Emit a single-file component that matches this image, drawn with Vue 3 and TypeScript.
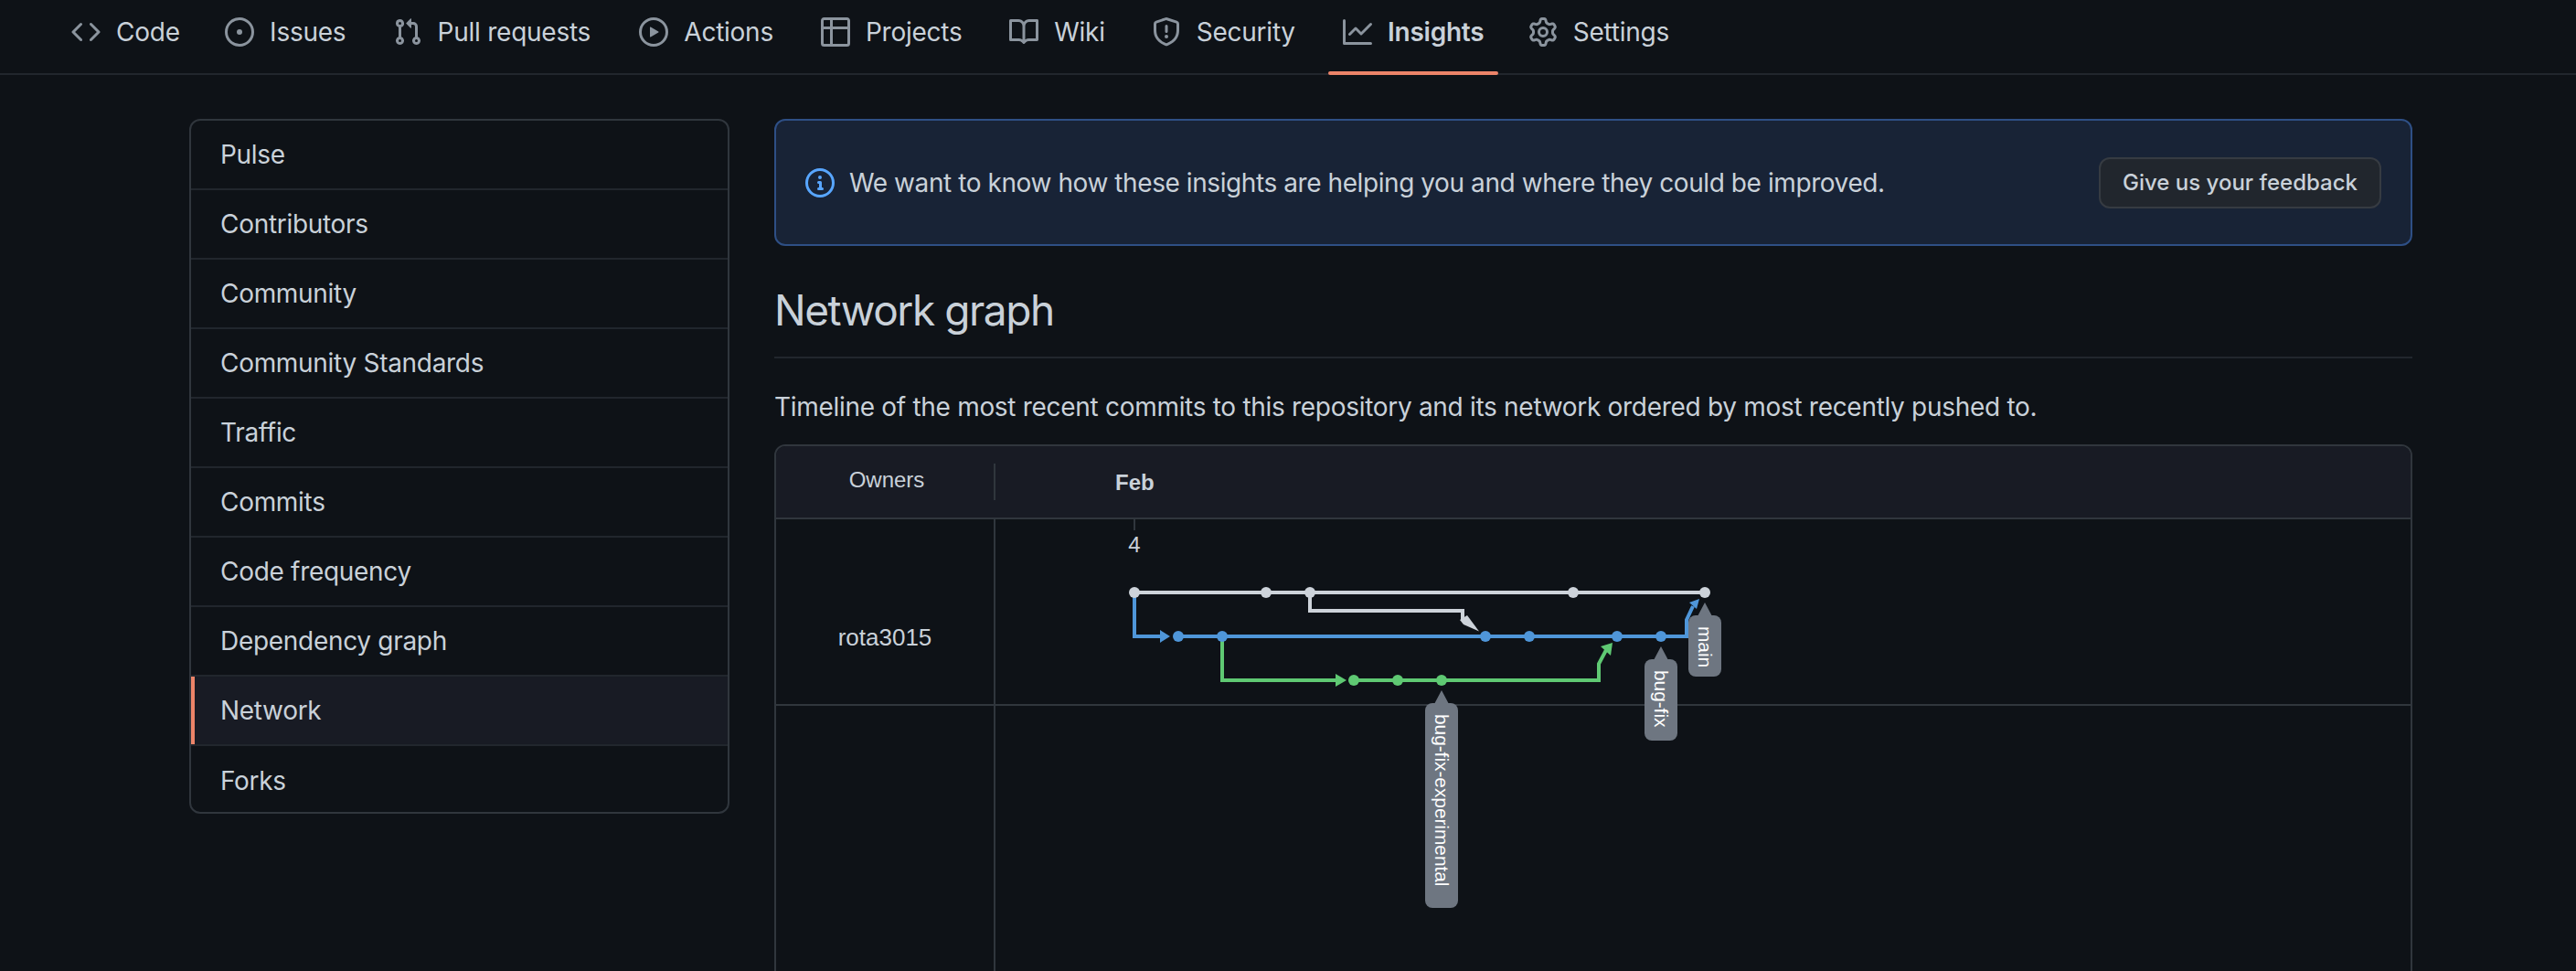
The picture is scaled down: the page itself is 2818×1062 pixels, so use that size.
<template>
  <div class="page">
    <!-- 顶部标签栏 -->
    <nav class="tabs">
      <a v-for="tab in tabs" :key="tab.name" class="tab" :class="{ active: tab.name === 'Insights' }">
        <svg class="tab-icon" width="32" height="32" viewBox="0 0 16 16" fill="currentColor">
          <path v-for="d in tab.paths" :key="d" :d="d" />
        </svg>
        <span class="tab-text" :data-content="tab.name">{{ tab.name }}</span>
      </a>
    </nav>

    <div class="layout">
      <!-- 侧边菜单 -->
      <aside class="menu">
        <a v-for="item in menuItems" :key="item" class="menu-item" :class="{ selected: item === 'Network' }">{{ item }}</a>
      </aside>

      <main class="content">
        <div class="banner">
          <svg class="banner-icon" width="32" height="32" viewBox="0 0 16 16" fill="currentColor">
            <path d="M0 8a8 8 0 1 1 16 0A8 8 0 0 1 0 8Zm8-6.5a6.5 6.5 0 1 0 0 13 6.5 6.5 0 0 0 0-13ZM6.5 7.75A.75.75 0 0 1 7.25 7h1a.75.75 0 0 1 .75.75v2.75h.25a.75.75 0 0 1 0 1.5h-2a.75.75 0 0 1 0-1.5h.25v-2h-.25a.75.75 0 0 1-.75-.75ZM8 6a1 1 0 1 1 0-2 1 1 0 0 1 0 2Z" />
          </svg>
          <span class="banner-text">We want to know how these insights are helping you and where they could be improved.</span>
          <button class="feedback-btn">Give us your feedback</button>
        </div>

        <h2 class="title">Network graph</h2>
        <p class="desc">Timeline of the most recent commits to this repository and its network ordered by most recently pushed to.</p>

        <div class="graph">
          <div class="graph-head">
            <div class="owners-head"><span>Owners</span></div>
            <div class="month">Feb</div>
          </div>
          <div class="graph-row">
            <div class="owner-cell">rota3015</div>
            <div class="canvas-cell"></div>
          </div>
          <div class="graph-row empty">
            <div class="owner-cell"></div>
            <div class="canvas-cell"></div>
          </div>

          <svg class="network" width="1792" height="576" viewBox="847 486 1792 576">
            <line x1="1241" y1="568" x2="1241" y2="580" stroke="#30363d" stroke-width="2" />
            <text x="1241" y="604" class="day" text-anchor="middle">4</text>

            <g fill="none" stroke-width="4">
              <path :d="whitePath" stroke="#cdd3da" />
              <path :d="bluePath" stroke="#4f96d9" />
              <path :d="greenPath" stroke="#5fc973" />
            </g>
            <polygon points="1280,696 1269,689 1269,703" fill="#4f96d9" />
            <polygon points="1473,744 1461,737 1461,751" fill="#5fc973" />
            <polygon points="1618,690.5 1605,673 1597,678 1601,683" fill="#cdd3da" />
            <polygon points="1859,655 1848,659 1856,666" fill="#4f96d9" />
            <polygon points="1764,703 1751,707 1762,717" fill="#5fc973" />

            <circle v-for="x in whiteNodes" :key="'w' + x" :cx="x" cy="648" r="6" fill="#cdd3da" />
            <circle v-for="x in blueNodes" :key="'b' + x" :cx="x" cy="696" r="6" fill="#4f96d9" />
            <circle v-for="x in greenNodes" :key="'g' + x" :cx="x" cy="744" r="6" fill="#5fc973" />

            <g v-for="label in labels" :key="label.text">
              <polygon :points="`${label.x},${label.tip} ${label.x - 8},${label.top + 1} ${label.x + 8},${label.top + 1}`" fill="#6e7681" />
              <rect :x="label.x - 18" :y="label.top" width="36" :height="label.height" rx="8" fill="#6e7681" />
              <text class="ref" :transform="`translate(${label.x - 7} ${label.top + 12}) rotate(90)`">{{ label.text }}</text>
            </g>
          </svg>
        </div>
      </main>
    </div>
  </div>
</template>

<script setup lang="ts">
interface Tab {
  name: string
  paths: string[]
}

const tabs: Tab[] = [
  { name: 'Code', paths: ['m11.28 3.22 4.25 4.25a.75.75 0 0 1 0 1.06l-4.25 4.25a.749.749 0 0 1-1.275-.326.749.749 0 0 1 .215-.734L13.94 8l-3.72-3.72a.749.749 0 0 1 .326-1.275.749.749 0 0 1 .734.215Zm-6.56 0a.751.751 0 0 1 1.042.018.751.751 0 0 1 .018 1.042L2.06 8l3.72 3.72a.749.749 0 0 1-.326 1.275.749.749 0 0 1-.734-.215L.47 8.53a.75.75 0 0 1 0-1.06Z'] },
  { name: 'Issues', paths: ['M8 9.5a1.5 1.5 0 1 0 0-3 1.5 1.5 0 0 0 0 3Z', 'M8 0a8 8 0 1 1 0 16A8 8 0 0 1 8 0ZM1.5 8a6.5 6.5 0 1 0 13 0 6.5 6.5 0 0 0-13 0Z'] },
  { name: 'Pull requests', paths: ['M1.5 3.25a2.25 2.25 0 1 1 3 2.122v5.256a2.251 2.251 0 1 1-1.5 0V5.372A2.25 2.25 0 0 1 1.5 3.25Zm5.677-.177L9.573.677A.25.25 0 0 1 10 .854V2.5h1A2.5 2.5 0 0 1 13.5 5v5.628a2.251 2.251 0 1 1-1.5 0V5a1 1 0 0 0-1-1h-1v1.646a.25.25 0 0 1-.427.177L7.177 3.427a.25.25 0 0 1 0-.354ZM3.75 2.5a.75.75 0 1 0 0 1.5.75.75 0 0 0 0-1.5Zm0 9.5a.75.75 0 1 0 0 1.5.75.75 0 0 0 0-1.5Zm8.25.75a.75.75 0 1 0 1.5 0 .75.75 0 0 0-1.5 0Z'] },
  { name: 'Actions', paths: ['M8 0a8 8 0 1 1 0 16A8 8 0 0 1 8 0ZM1.5 8a6.5 6.5 0 1 0 13 0 6.5 6.5 0 0 0-13 0Zm4.879-2.773 4.264 2.559a.25.25 0 0 1 0 .428l-4.264 2.559A.25.25 0 0 1 6 10.559V5.442a.25.25 0 0 1 .379-.215Z'] },
  { name: 'Projects', paths: ['M0 1.75C0 .784.784 0 1.75 0h12.5C15.216 0 16 .784 16 1.75v12.5A1.75 1.75 0 0 1 14.25 16H1.75A1.75 1.75 0 0 1 0 14.25ZM6.5 6.5v8h7.75a.25.25 0 0 0 .25-.25V6.5Zm8-1.5V1.75a.25.25 0 0 0-.25-.25H6.5V5Zm-13 1.5v7.75c0 .138.112.25.25.25H5v-8ZM5 5V1.5H1.75a.25.25 0 0 0-.25.25V5Z'] },
  { name: 'Wiki', paths: ['M0 1.75A.75.75 0 0 1 .75 1h4.253c1.227 0 2.317.59 3 1.501A3.743 3.743 0 0 1 11.006 1h4.245a.75.75 0 0 1 .75.75v10.5a.75.75 0 0 1-.75.75h-4.507a2.25 2.25 0 0 0-1.591.659l-.622.621a.75.75 0 0 1-1.06 0l-.622-.621A2.25 2.25 0 0 0 5.258 13H.75a.75.75 0 0 1-.75-.75Zm7.251 10.324.004-5.073-.002-2.253A2.25 2.25 0 0 0 5.003 2.5H1.5v9h3.757a3.75 3.75 0 0 1 1.994.574ZM8.755 4.75l-.004 7.322a3.752 3.752 0 0 1 1.992-.572H14.5v-9h-3.495a2.25 2.25 0 0 0-2.25 2.25Z'] },
  { name: 'Security', paths: ['M7.467.133a1.748 1.748 0 0 1 1.066 0l5.25 1.68A1.75 1.75 0 0 1 15 3.48V7c0 1.566-.32 3.182-1.303 4.682-.983 1.498-2.585 2.813-5.032 3.855a1.697 1.697 0 0 1-1.33 0c-2.447-1.042-4.049-2.357-5.032-3.855C1.32 10.182 1 8.566 1 7V3.48a1.75 1.75 0 0 1 1.217-1.667Zm.61 1.429a.25.25 0 0 0-.153 0l-5.25 1.68a.25.25 0 0 0-.174.238V7c0 1.358.275 2.666 1.057 3.86.784 1.194 2.121 2.34 4.366 3.297a.196.196 0 0 0 .154 0c2.245-.956 3.582-2.104 4.366-3.298C13.225 9.666 13.5 8.36 13.5 7V3.48a.251.251 0 0 0-.174-.237l-5.25-1.68ZM8.75 4.75v3a.75.75 0 0 1-1.5 0v-3a.75.75 0 0 1 1.5 0ZM9 10.5a1 1 0 1 1-2 0 1 1 0 0 1 2 0Z'] },
  { name: 'Insights', paths: ['M1.5 1.75V13.5h13.75a.75.75 0 0 1 0 1.5H.75a.75.75 0 0 1-.75-.75V1.75a.75.75 0 0 1 1.5 0Zm14.28 2.53-5.25 5.25a.75.75 0 0 1-1.06 0L7 7.06 4.28 9.78a.751.751 0 0 1-1.042-.018.751.751 0 0 1-.018-1.042l3.25-3.25a.75.75 0 0 1 1.06 0L10 7.94l4.72-4.72a.751.751 0 0 1 1.042.018.751.751 0 0 1 .018 1.042Z'] },
  { name: 'Settings', paths: ['M8 0a8.2 8.2 0 0 1 .701.031C9.444.095 9.99.645 10.16 1.29l.288 1.107c.018.066.079.158.212.224.231.114.454.243.668.386.123.082.233.09.299.071l1.103-.303c.644-.176 1.392.021 1.82.63.27.385.506.792.704 1.218.315.675.111 1.422-.364 1.891l-.814.806c-.049.048-.098.147-.088.294.016.257.016.515 0 .772-.01.147.038.246.088.294l.814.806c.475.469.679 1.216.364 1.891a7.977 7.977 0 0 1-.704 1.217c-.428.61-1.176.807-1.82.63l-1.102-.302c-.067-.019-.177-.011-.3.071a5.909 5.909 0 0 1-.668.386c-.133.066-.194.158-.211.224l-.29 1.106c-.168.646-.715 1.196-1.458 1.26a8.006 8.006 0 0 1-1.402 0c-.743-.064-1.289-.614-1.458-1.26l-.289-1.106c-.018-.066-.079-.158-.212-.224a5.738 5.738 0 0 1-.668-.386c-.123-.082-.233-.09-.299-.071l-1.103.303c-.644.176-1.392-.021-1.82-.63a8.12 8.12 0 0 1-.704-1.218c-.315-.675-.111-1.422.363-1.891l.815-.806c.05-.048.098-.147.088-.294a6.214 6.214 0 0 1 0-.772c.01-.147-.038-.246-.088-.294l-.815-.806C.635 6.045.431 5.298.746 4.623a7.92 7.92 0 0 1 .704-1.217c.428-.61 1.176-.807 1.82-.63l1.102.302c.067.019.177.011.3-.071.214-.143.437-.272.668-.386.133-.066.194-.158.211-.224l.29-1.106C6.009.645 6.556.095 7.299.03 7.53.01 7.764 0 8 0Zm-.571 1.525c-.036.003-.108.036-.137.146l-.289 1.105c-.147.561-.549.967-.998 1.189-.173.086-.34.183-.5.29-.417.278-.97.423-1.529.27l-1.103-.303c-.109-.03-.175.016-.195.045-.22.312-.412.644-.573.99-.014.031-.021.11.059.19l.815.806c.411.406.562.957.53 1.456a4.709 4.709 0 0 0 0 .582c.032.499-.119 1.05-.53 1.456l-.815.806c-.081.08-.073.159-.059.19.162.346.353.677.573.989.02.03.085.076.195.046l1.102-.303c.56-.153 1.113-.008 1.53.27.161.107.328.204.501.29.447.222.85.629.997 1.189l.289 1.105c.029.109.101.143.137.146a6.6 6.6 0 0 0 1.142 0c.036-.003.108-.036.137-.146l.289-1.105c.147-.561.549-.967.998-1.189.173-.086.34-.183.5-.29.417-.278.97-.423 1.529-.27l1.103.303c.109.029.175-.016.195-.045.22-.313.411-.644.573-.99.014-.031.021-.11-.059-.19l-.815-.806c-.411-.406-.562-.957-.53-1.456a4.709 4.709 0 0 0 0-.582c-.032-.499.119-1.05.53-1.456l.815-.806c.081-.08.073-.159.059-.19a6.464 6.464 0 0 0-.573-.989c-.02-.03-.085-.076-.195-.046l-1.102.303c-.56.153-1.113.008-1.53-.27a4.44 4.44 0 0 0-.501-.29c-.447-.222-.85-.629-.997-1.189l-.289-1.105c-.029-.11-.101-.143-.137-.146a6.6 6.6 0 0 0-1.142 0ZM11 8a3 3 0 1 1-6 0 3 3 0 0 1 6 0ZM9.5 8a1.5 1.5 0 1 0-3.001.001A1.5 1.5 0 0 0 9.5 8Z'] }
]

const menuItems = [
  'Pulse',
  'Contributors',
  'Community',
  'Community Standards',
  'Traffic',
  'Commits',
  'Code frequency',
  'Dependency graph',
  'Network',
  'Forks'
]

// 提交节点 x 坐标，每列 48px
const whiteNodes = [1241, 1385, 1433, 1721, 1865]
const blueNodes = [1289, 1337, 1625, 1673, 1769, 1817]
const greenNodes = [1481, 1529, 1577]

const whitePath = 'M1241 648H1865M1433 648V668H1600V678'
const bluePath = 'M1241 648V696H1270M1289 696H1845V678L1852 663'
const greenPath = 'M1337 696V744H1462M1481 744H1749V726L1757 711'

const labels = [
  { text: 'main', x: 1865, tip: 659, top: 673, height: 67 },
  { text: 'bug-fix', x: 1817, tip: 707, top: 721, height: 89 },
  { text: 'bug-fix-experimental', x: 1577, tip: 755, top: 769, height: 224 }
]
</script>

<style scoped>
.page {
  height: 1062px;
  overflow: hidden;
  background: #0e1217;
  color: #c9d1d9;
  font-family: Inter, "Liberation Sans", sans-serif;
  font-size: 28px;
  letter-spacing: -0.3px;
}

.tabs {
  display: flex;
  gap: 16.4px;
  height: 80px;
  padding: 0 62px;
  border-bottom: 2px solid #21262d;
  letter-spacing: -0.25px;
}

.tab {
  display: flex;
  align-items: center;
  gap: 17px;
  height: 70px;
  padding: 0 16px;
  position: relative;
  margin-bottom: 10px;
}

.tab.active {
  font-weight: 600;
}

.tab.active::after {
  content: "";
  position: absolute;
  left: 0;
  right: 0;
  bottom: -12px;
  height: 4px;
  border-radius: 2px;
  background: #ec8469;
}

.tab-icon {
  color: #8b949e;
  flex-shrink: 0;
}

.tab-text::before {
  content: attr(data-content);
  display: block;
  font-weight: 600;
  height: 0;
  visibility: hidden;
}

.layout {
  display: flex;
  gap: 49px;
  padding: 48px 179px 0 207px;
}

.menu {
  width: 591px;
  height: 760px;
  flex-shrink: 0;
  box-sizing: border-box;
  border: 2px solid #30363d;
  border-radius: 12px;
  overflow: hidden;
}

.menu-item {
  display: flex;
  align-items: center;
  height: 76px;
  box-sizing: border-box;
  padding-left: 32px;
  border-bottom: 2px solid #21262d;
}

.menu-item:last-child {
  border-bottom: none;
}

.menu-item.selected {
  background: #181b24;
  box-shadow: inset 4px 0 0 #ec8469;
}

.content {
  flex: 1;
  min-width: 0;
}

.banner {
  display: flex;
  align-items: center;
  height: 139px;
  box-sizing: border-box;
  padding: 0 32px;
  background: #182336;
  border: 2px solid #2e4f85;
  border-radius: 12px;
}

.banner-icon {
  color: #58a6ff;
  margin-right: 16px;
  flex-shrink: 0;
}

.banner-text {
  flex: 1;
  letter-spacing: -0.42px;
}

.feedback-btn {
  width: 309px;
  height: 56px;
  padding: 0;
  font-family: inherit;
  font-size: 24px;
  font-weight: 500;
  color: #c9d1d9;
  background: #21262d;
  border: 2px solid #363b42;
  border-radius: 12px;
}

.title {
  margin: 39px 0 0;
  padding-bottom: 16px;
  height: 66px;
  line-height: 63px;
  font-size: 46px;
  font-weight: 400;
  letter-spacing: -1.45px;
  border-bottom: 2px solid #21262d;
}

.desc {
  margin: 32px 0 0;
  height: 42px;
  line-height: 42px;
}

.graph {
  position: relative;
  margin-top: 20px;
  height: 800px;
  box-sizing: border-box;
  border: 2px solid #30363d;
  border-radius: 12px;
  font-family: "Liberation Sans", Arial, sans-serif;
  letter-spacing: 0;
}

.graph-head {
  display: flex;
  height: 78px;
  background: #181b24;
  border-bottom: 2px solid #30363d;
  border-radius: 10px 10px 0 0;
  font-size: 24px;
}

.owners-head {
  width: 240px;
  display: flex;
  align-items: center;
}

.owners-head span {
  flex: 1;
  height: 40px;
  line-height: 36px;
  padding-left: 4px;
  text-align: center;
  border-right: 2px solid #30363d;
}

.month {
  font-weight: 700;
  margin-left: 131px;
  line-height: 80px;
}

.graph-row {
  display: flex;
  height: 202px;
  border-bottom: 2px solid #30363d;
}

.graph-row.empty {
  height: 600px;
  border-bottom: none;
}

.owner-cell {
  width: 240px;
  box-sizing: border-box;
  border-right: 2px solid #30363d;
  text-align: center;
  font-size: 26px;
  line-height: 258px;
  height: 100%;
}

.canvas-cell {
  flex: 1;
}

.network {
  position: absolute;
  left: -2px;
  top: -2px;
}

.day {
  font-size: 24px;
  fill: #c9d1d9;
}

.ref {
  font-size: 20.8px;
  fill: #ffffff;
}
</style>

<style>
html,
body {
  margin: 0;
  background: #0e1217;
}
</style>
